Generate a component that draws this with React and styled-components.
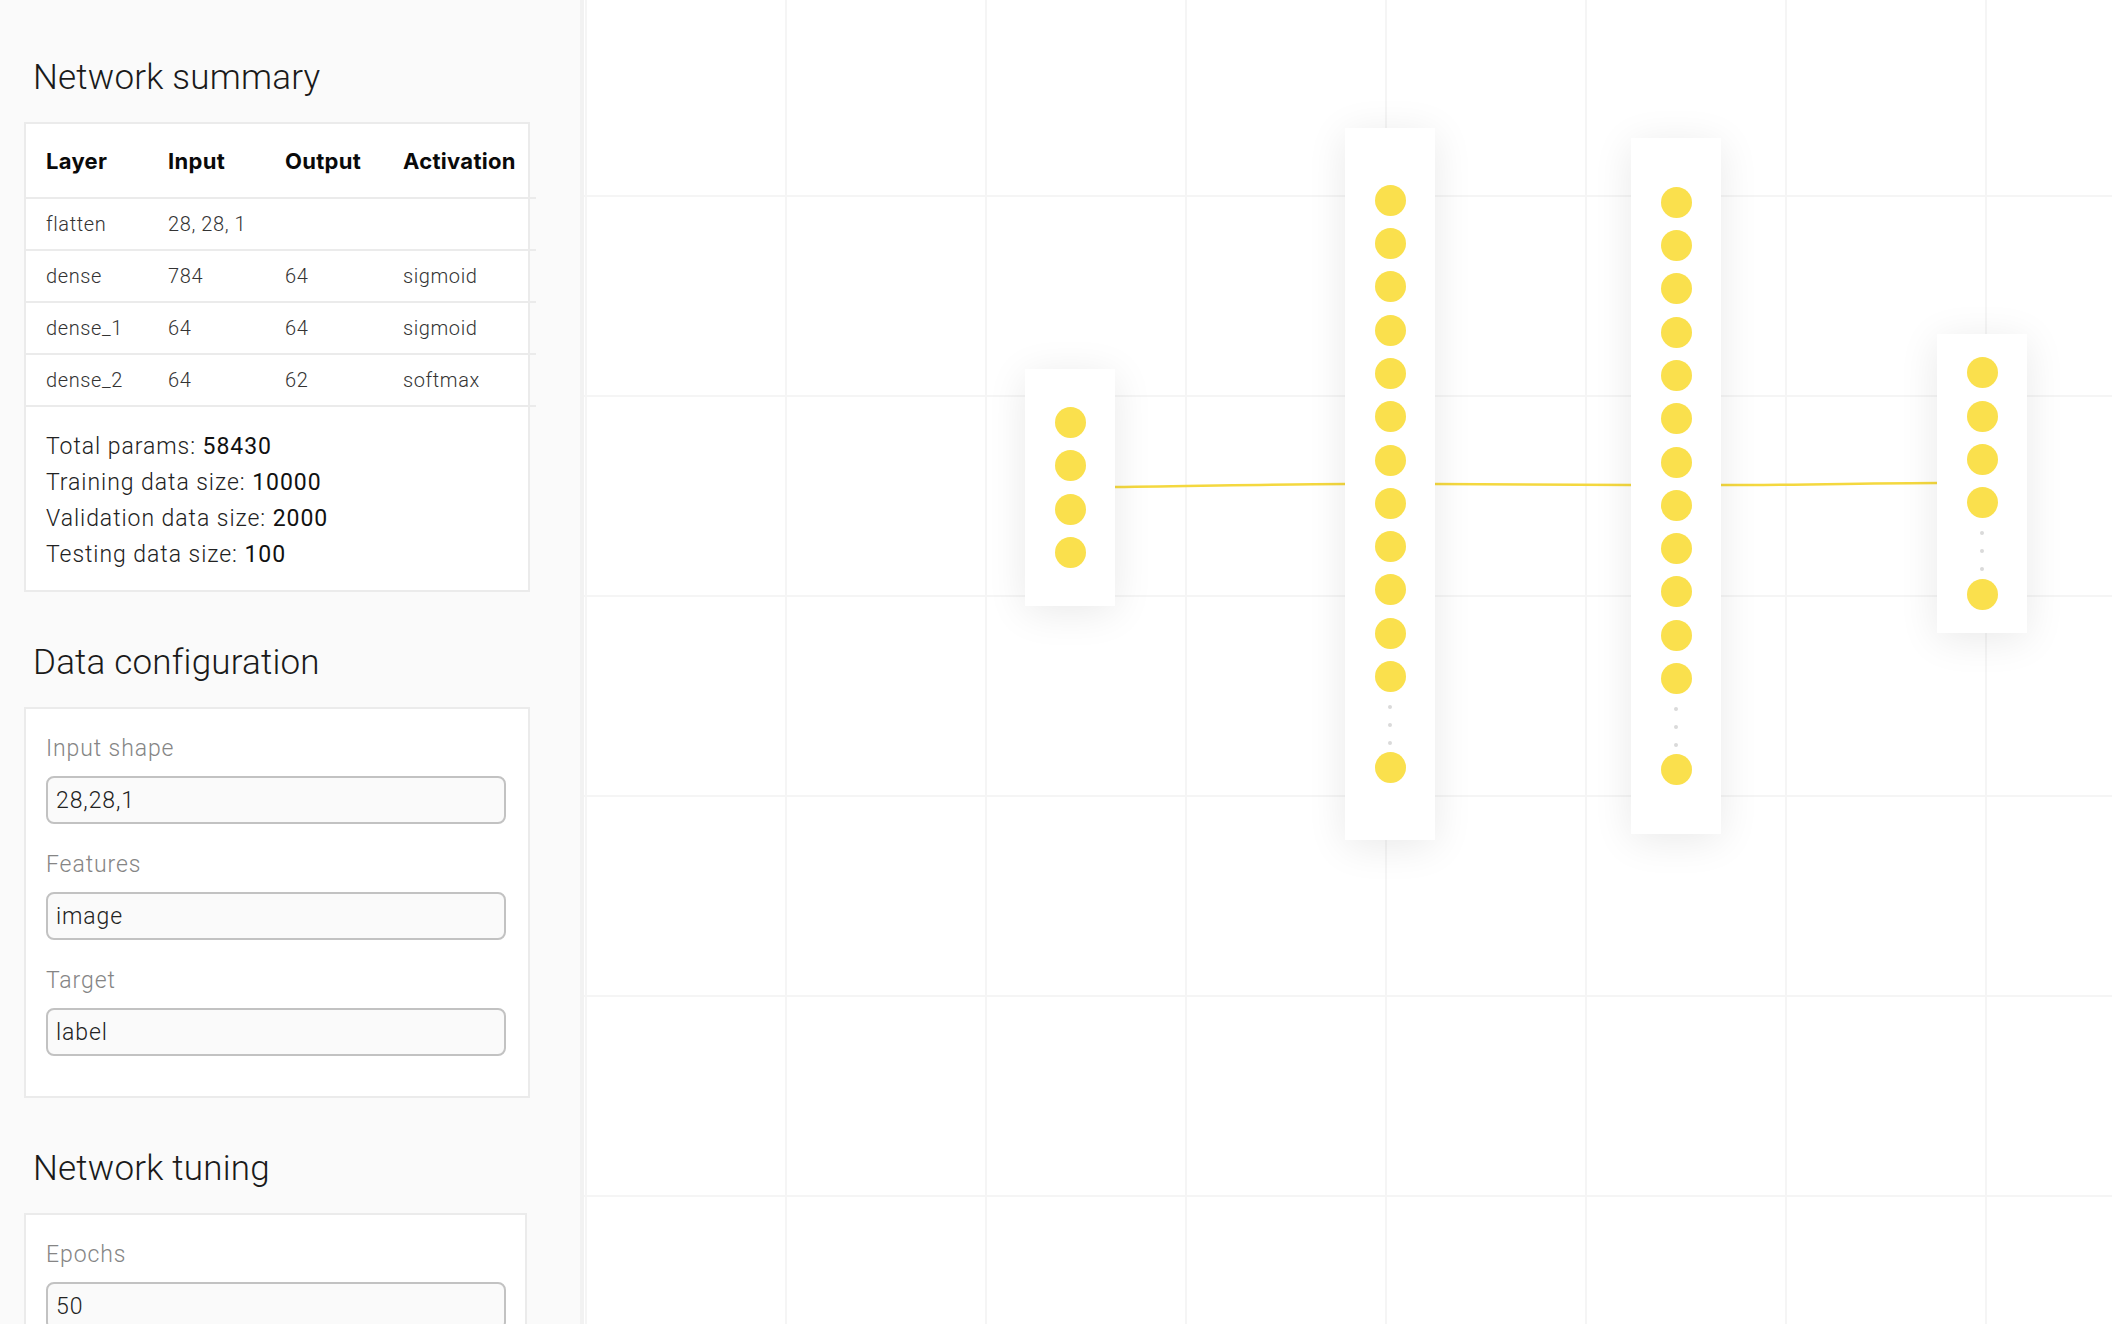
import React from "react";
import styled, { createGlobalStyle } from "styled-components";

const GlobalStyle = createGlobalStyle`
  * { box-sizing: border-box; }
  html, body { margin: 0; padding: 0; height: 100%; overflow: hidden; }
  body {
    font-family: Inter, "Liberation Sans", sans-serif;
    color: #222;
    background: #fff;
  }
`;

const light = `Roboto, Inter, "Liberation Sans", sans-serif`;

const summary = [
  { layer: "flatten", input: "28, 28, 1", output: "", activation: "" },
  { layer: "dense", input: "784", output: "64", activation: "sigmoid" },
  { layer: "dense_1", input: "64", output: "64", activation: "sigmoid" },
  { layer: "dense_2", input: "64", output: "62", activation: "softmax" },
];

const stats = [
  ["Total params", "58430"],
  ["Training data size", "10000"],
  ["Validation data size", "2000"],
  ["Testing data size", "100"],
];

// layers drawn on the canvas (x / y relative to the canvas)
const layers = [
  { id: "in", left: 441, top: 369, height: 237, nodes: 4, more: false },
  { id: "h1", left: 761, top: 128, height: 712, nodes: 12, more: true },
  { id: "h2", left: 1047, top: 138, height: 696, nodes: 12, more: true },
  { id: "out", left: 1353, top: 334, height: 299, nodes: 4, more: true },
];

function App() {
  return (
    <>
      <GlobalStyle />
      <Page>
        <Sidebar>
          <SectionTitle>Network summary</SectionTitle>
          <Card>
            <SummaryTable>
              <colgroup>
                <col style={{ width: 122 }} />
                <col style={{ width: 117 }} />
                <col style={{ width: 118 }} />
                <col style={{ width: 153 }} />
              </colgroup>
              <thead>
                <tr>
                  <HeadCell>Layer</HeadCell>
                  <HeadCell>Input</HeadCell>
                  <HeadCell>Output</HeadCell>
                  <HeadCell>Activation</HeadCell>
                </tr>
              </thead>
              <tbody>
                {summary.map((row) => (
                  <tr key={row.layer}>
                    <Cell>{row.layer}</Cell>
                    <Cell>{row.input}</Cell>
                    <Cell>{row.output}</Cell>
                    <Cell>{row.activation}</Cell>
                  </tr>
                ))}
              </tbody>
            </SummaryTable>
            <Stats>
              {stats.map(([label, value]) => (
                <StatLine key={label}>
                  {label}: <b>{value}</b>
                </StatLine>
              ))}
            </Stats>
          </Card>

          <SectionTitle>Data configuration</SectionTitle>
          <Card>
            <Form>
              <Field>
                <Label>Input shape</Label>
                <TextInput defaultValue="28,28,1" />
              </Field>
              <Field>
                <Label>Features</Label>
                <TextInput defaultValue="image" />
              </Field>
              <Field>
                <Label>Target</Label>
                <TextInput defaultValue="label" />
              </Field>
            </Form>
          </Card>

          <SectionTitle>Network tuning</SectionTitle>
          <Card $width={503}>
            <Form>
              <Field>
                <Label>Epochs</Label>
                <TextInput defaultValue="50" />
              </Field>
            </Form>
          </Card>
        </Sidebar>

        <Canvas>
          <Links width="1528" height="1324">
            <path d="M531 487 C 620 486, 700 484, 761 484" />
            <path d="M851 484 C 930 484, 990 485, 1047 485" />
            <path d="M1137 485 C 1220 485, 1290 483, 1353 483" />
          </Links>
          {layers.map((l) => (
            <LayerBox
              key={l.id}
              style={{ left: l.left, top: l.top, height: l.height }}
            >
              {Array.from({ length: l.nodes }).map((_, i) => (
                <Neuron key={i} />
              ))}
              {l.more && (
                <>
                  <Ellipsis>
                    <Dot />
                    <Dot />
                    <Dot />
                  </Ellipsis>
                  <Neuron />
                </>
              )}
            </LayerBox>
          ))}
        </Canvas>
      </Page>
    </>
  );
}

const Page = styled.div`
  display: flex;
  width: 100vw;
  height: 100vh;
  overflow: hidden;
`;

const Sidebar = styled.aside`
  flex: none;
  width: 584px;
  height: 100%;
  overflow: hidden;
  background: #fafafa;
  border-right: 4px solid #f2f2f2;
  padding: 55px 0 0 24px;
`;

const SectionTitle = styled.h2`
  margin: 48px 0 24px 9px;
  padding-top: 2px;
  font-family: ${light};
  font-size: 35px;
  font-weight: 300;
  line-height: 41px;
  color: #1a1a1a;
  letter-spacing: 0.2px;

  &:first-child {
    margin-top: 0;
  }
`;

const Card = styled.section`
  width: ${(p) => p.$width || 506}px;
  background: #fff;
  border: 2px solid #ebebeb;
`;

const SummaryTable = styled.table`
  table-layout: fixed;
  width: 510px;
  border-collapse: separate;
  border-spacing: 0;
`;

const HeadCell = styled.th`
  box-sizing: content-box;
  height: 73px;
  padding: 0 0 0 20px;
  text-align: left;
  font-size: 22px;
  font-weight: 700;
  color: #0a0a0a;
  letter-spacing: 0.3px;
  border-bottom: 2px solid #ebebeb;
  white-space: nowrap;
`;

const Cell = styled.td`
  box-sizing: content-box;
  height: 50px;
  padding: 0 0 0 20px;
  font-family: ${light};
  font-size: 20px;
  font-weight: 300;
  letter-spacing: 0.6px;
  color: #333;
  border-bottom: 2px solid #ebebeb;
  white-space: nowrap;
`;

const Stats = styled.div`
  padding: 22px 20px 17px;
`;

const StatLine = styled.div`
  font-family: ${light};
  font-size: 23px;
  line-height: 36px;
  font-weight: 300;
  letter-spacing: 0.95px;
  color: #222;

  b {
    font-weight: 400;
    color: #111;
  }
`;

const Form = styled.div`
  display: flex;
  flex-direction: column;
  gap: 27px;
  padding: 26px 20px 40px;
`;

const Field = styled.label`
  display: flex;
  flex-direction: column;
`;

const Label = styled.span`
  margin-bottom: 14px;
  font-family: ${light};
  font-size: 23px;
  line-height: 27px;
  font-weight: 300;
  letter-spacing: 0.9px;
  color: #858585;
`;

const TextInput = styled.input`
  width: 460px;
  height: 48px;
  padding: 0 8px;
  border: 2px solid #c2c2c2;
  border-radius: 8px;
  background: #fafafa;
  font-family: ${light};
  font-size: 23px;
  font-weight: 300;
  letter-spacing: 0.9px;
  color: #222;
  outline: none;
`;

const Canvas = styled.main`
  position: relative;
  flex: 1;
  height: 100%;
  background-color: #fff;
  background-image: linear-gradient(to right, #f5f5f5 2px, transparent 2px),
    linear-gradient(to bottom, #f5f5f5 2px, transparent 2px);
  background-size: 200px 200px;
  background-position: 1px -5px;
`;

const Links = styled.svg`
  position: absolute;
  left: 0;
  top: 0;
  fill: none;
  stroke: #f4d83f;
  stroke-width: 2.5;
`;

const LayerBox = styled.div`
  position: absolute;
  width: 90px;
  display: flex;
  flex-direction: column;
  align-items: center;
  justify-content: center;
  background: #fff;
  box-shadow: 0 6px 40px rgba(0, 0, 0, 0.09);
`;

const Neuron = styled.span`
  flex: none;
  width: 31px;
  height: 31px;
  margin: 6.15px 0;
  border-radius: 50%;
  background: #fae04d;
`;

const Ellipsis = styled.div`
  display: flex;
  flex-direction: column;
  align-items: center;
  gap: 14px;
  padding: 6.5px 0 1.5px;
`;

const Dot = styled.span`
  width: 4px;
  height: 4px;
  border-radius: 50%;
  background: #dadada;
`;

export default App;
